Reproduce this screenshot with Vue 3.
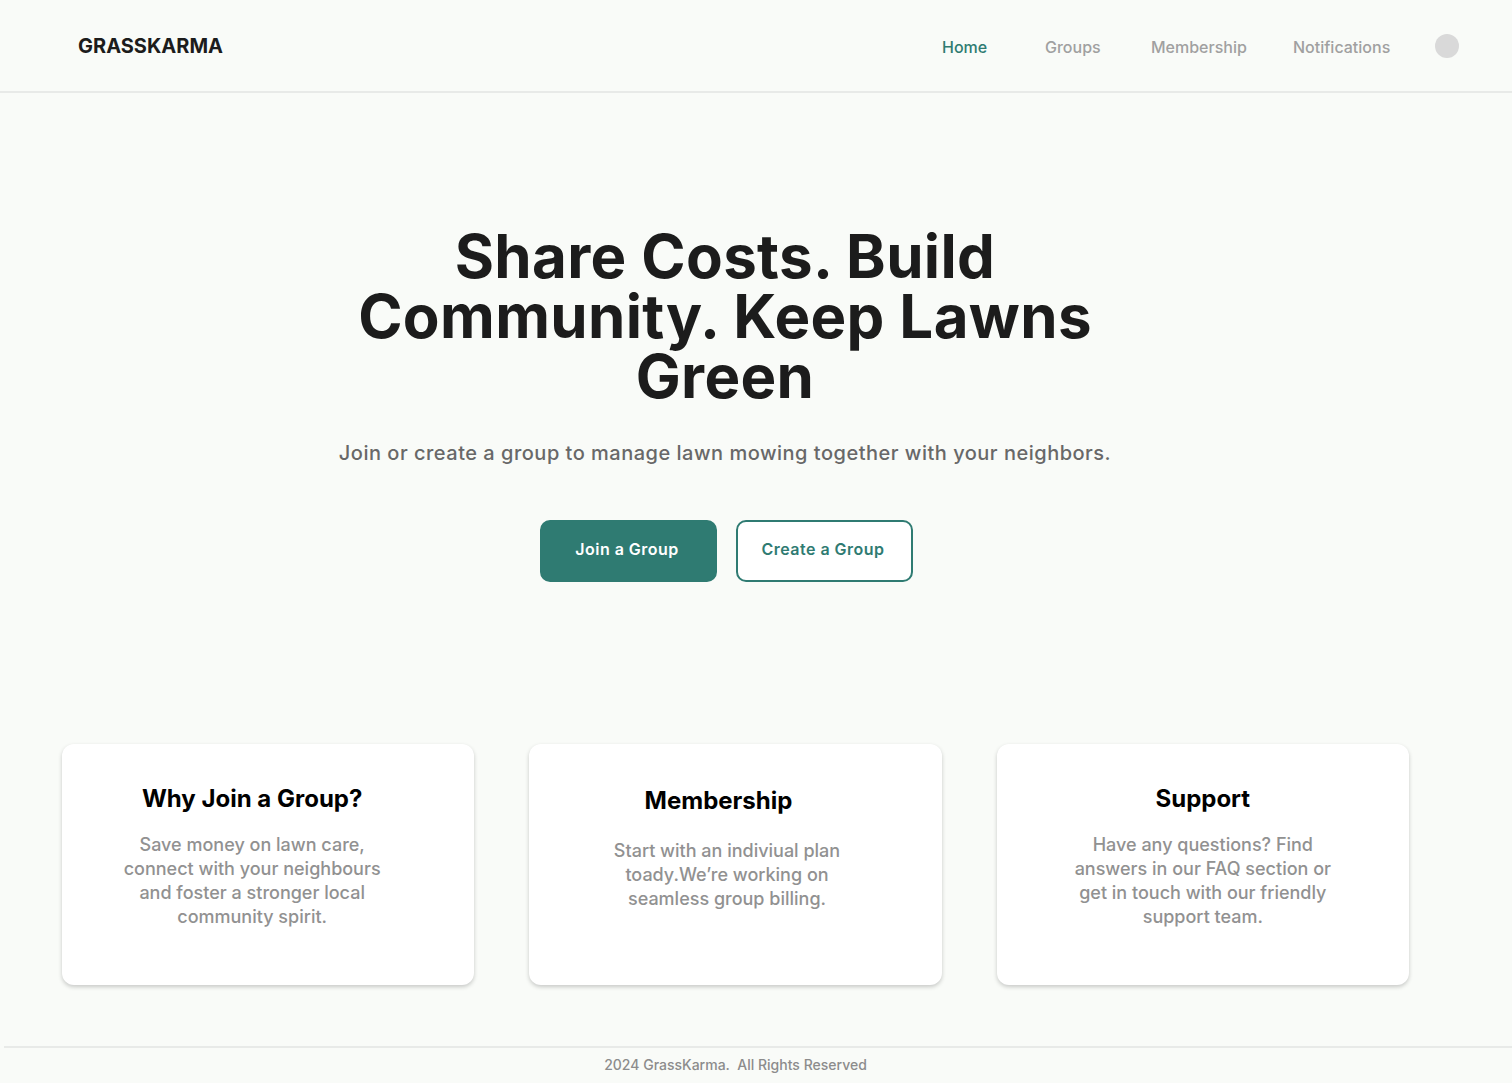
<script setup>
const links = [
  { label: 'Home', active: true },
  { label: 'Groups' },
  { label: 'Membership' },
  { label: 'Notifications' },
]
const cards = [
  { title: 'Why Join a Group?', lines: ['Save money on lawn care,', 'connect with your neighbours', 'and foster a stronger local', 'community spirit.'], kind: 'left' },
  { title: 'Membership', lines: ['Start with an indiviual plan', 'toady.We’re working on', 'seamless group billing.'], kind: 'middle' },
  { title: 'Support', lines: ['Have any questions? Find', 'answers in our FAQ section or', 'get in touch with our friendly', 'support team.'], kind: 'right' },
]
</script>

<template>
  <div class="page">
    <header class="header">
      <a class="brand" href="#">GRASSKARMA</a>
      <nav class="nav" aria-label="Main">
        <a v-for="l in links" :key="l.label" href="#" :class="{ active: l.active }">{{ l.label }}</a>
        <button class="avatar" type="button" aria-label="Account"></button>
      </nav>
    </header>

    <main>
      <section class="hero">
        <h1>Share Costs. Build Community. Keep Lawns Green</h1>
        <p>Join or create a group to manage lawn mowing together with your neighbors.</p>
        <div class="actions">
          <button type="button" class="btn primary">Join a Group</button>
          <button type="button" class="btn outline">Create a Group</button>
        </div>
      </section>

      <section class="cards">
        <article v-for="c in cards" :key="c.title" class="card" :class="c.kind">
          <h2>{{ c.title }}</h2>
          <p><template v-for="(t, i) in c.lines" :key="t"><br v-if="i">{{ t }}</template></p>
        </article>
      </section>
    </main>

    <footer class="footer">2024 GrassKarma.&nbsp; All Rights Reserved</footer>
  </div>
</template>

<style>
body {
  margin: 0;
  background: #f9fbf8;
}
</style>

<style scoped>
.page {
  font-family: Inter, "Liberation Sans", sans-serif;
  color: #1c1c1c;
}
.header {
  display: flex;
  align-items: center;
  justify-content: space-between;
  box-sizing: border-box;
  height: 93px;
  padding: 0 53px 0 78px;
  border-bottom: 2px solid #e8eae8;
}
.brand {
  color: #1c1c1c;
  font-size: 20px;
  font-weight: 700;
  text-decoration: none;
}
.nav {
  display: grid;
  grid-template-columns: 103px 106px 142px 142px 24px;
  align-items: center;
}
.nav a {
  padding-top: 2px;
  color: #a0a0a0;
  font-size: 16px;
  font-weight: 500;
  line-height: 24px;
  text-decoration: none;
}
.nav a.active {
  color: #2f7b72;
}
.avatar {
  width: 24px;
  height: 24px;
  padding: 0;
  border: 0;
  border-radius: 50%;
  background: #d9d9d9;
}
.hero {
  display: flex;
  flex-direction: column;
  align-items: center;
  padding: 133px 62px 0 0;
  text-align: center;
}
h1 {
  max-width: 780px;
  margin: 0;
  font-size: 60px;
  font-weight: 700;
  line-height: 60px;
  letter-spacing: 0.006em;
}
.hero p {
  margin: 32px 0 0;
  color: #686868;
  font-size: 20px;
  font-weight: 500;
  line-height: 30px;
  letter-spacing: 0.025em;
}
.actions {
  display: flex;
  gap: 19px;
  margin: 52px 0 0 2px;
}
.btn {
  width: 177px;
  height: 62px;
  padding: 0 2px 4px 0;
  border: 2px solid #2f7b72;
  border-radius: 10px;
  font-family: inherit;
  font-size: 16px;
  font-weight: 600;
  letter-spacing: 0.03em;
}
.primary {
  background: #2f7b72;
  color: #fff;
}
.outline {
  background: #fff;
  color: #2f7b72;
}
.cards {
  display: grid;
  grid-template-columns: repeat(3, 1fr);
  gap: 55px;
  padding: 162px 103px 0 62px;
}
.card {
  box-sizing: border-box;
  min-height: 241px;
  padding: 40px 32px;
  border-radius: 12px;
  background: #fff;
  box-shadow: 0 2px 4px rgba(0, 0, 0, 0.2);
  text-align: center;
}
h2 {
  margin: 0;
  color: #000;
  font-size: 24px;
  font-weight: 700;
  line-height: 30px;
}
.card p {
  margin: 19px 0 0;
  color: #919191;
  font-size: 18px;
  font-weight: 500;
  line-height: 24px;
}
.left {
  padding-right: 64px;
}
.middle {
  padding-top: 42px;
}
.middle h2 {
  padding-right: 34px;
}
.middle p {
  margin-top: 23px;
  padding-right: 17px;
}
.footer {
  margin: 61px 0 0 4px;
  padding: 8px 45px 10px 0;
  border-top: 2px solid #e8eae8;
  color: #8c8c8c;
  font-size: 14px;
  font-weight: 500;
  line-height: 17px;
  text-align: center;
}
</style>
